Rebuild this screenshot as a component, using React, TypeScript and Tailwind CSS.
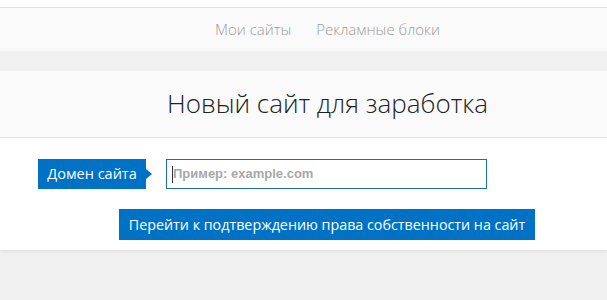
export default function App() {
  return (
    <div className="w-[607px] h-[300px] bg-[#f0f0f0] overflow-hidden" style={{ fontFamily: '"Open Sans", "Noto Sans", sans-serif' }}>
      <div className="h-[7px] bg-white" />
      <div className="h-[44px] bg-[#fafafa] border-t border-[#e2e2e2] flex items-center justify-center pl-[48px] gap-[25px] text-[15px] font-light text-[#9a9a9a]">
        <span>Мои сайты</span>
        <span>Рекламные блоки</span>
      </div>
      <div className="h-[20px]" />
      <div className="h-[67px] bg-[#fafafa] border-b border-[#e2e2e2] flex items-center justify-center pl-[48px] pb-[2px]">
        <h1 className="text-[26px] font-light text-[#222] leading-none">Новый сайт для заработка</h1>
      </div>
      <div className="bg-white h-[112px] pt-[21px] shadow-[0_2px_3px_rgba(0,0,0,0.06)]">
        <div className="flex items-center h-[30px]">
          <div className="relative ml-[38px] w-[108px] h-[30px] bg-[#0072c6] text-white text-[14.5px] flex items-center justify-center">
            Домен сайта
            <span className="absolute right-[-6px] top-[10px] w-0 h-0 border-y-[5px] border-y-transparent border-l-[6px] border-l-[#0072c6]" />
          </div>
          <div className="ml-[20px] w-[321px] h-[30px] border border-[#1a6db8] flex items-center pl-[5px]">
            <span className="w-px h-[17px] bg-[#333]" />
            <span className="text-[13px] font-bold text-[#a8a8a8]" style={{ fontFamily: '"Liberation Sans", Arial, sans-serif' }}>Пример: example.com</span>
          </div>
        </div>
        <div className="mt-[20px] ml-[119px] w-[416px] h-[31px] bg-[#0072c6] text-white text-[14.3px] flex items-center justify-center">
          Перейти к подтверждению права собственности на сайт
        </div>
      </div>
    </div>
  );
}
